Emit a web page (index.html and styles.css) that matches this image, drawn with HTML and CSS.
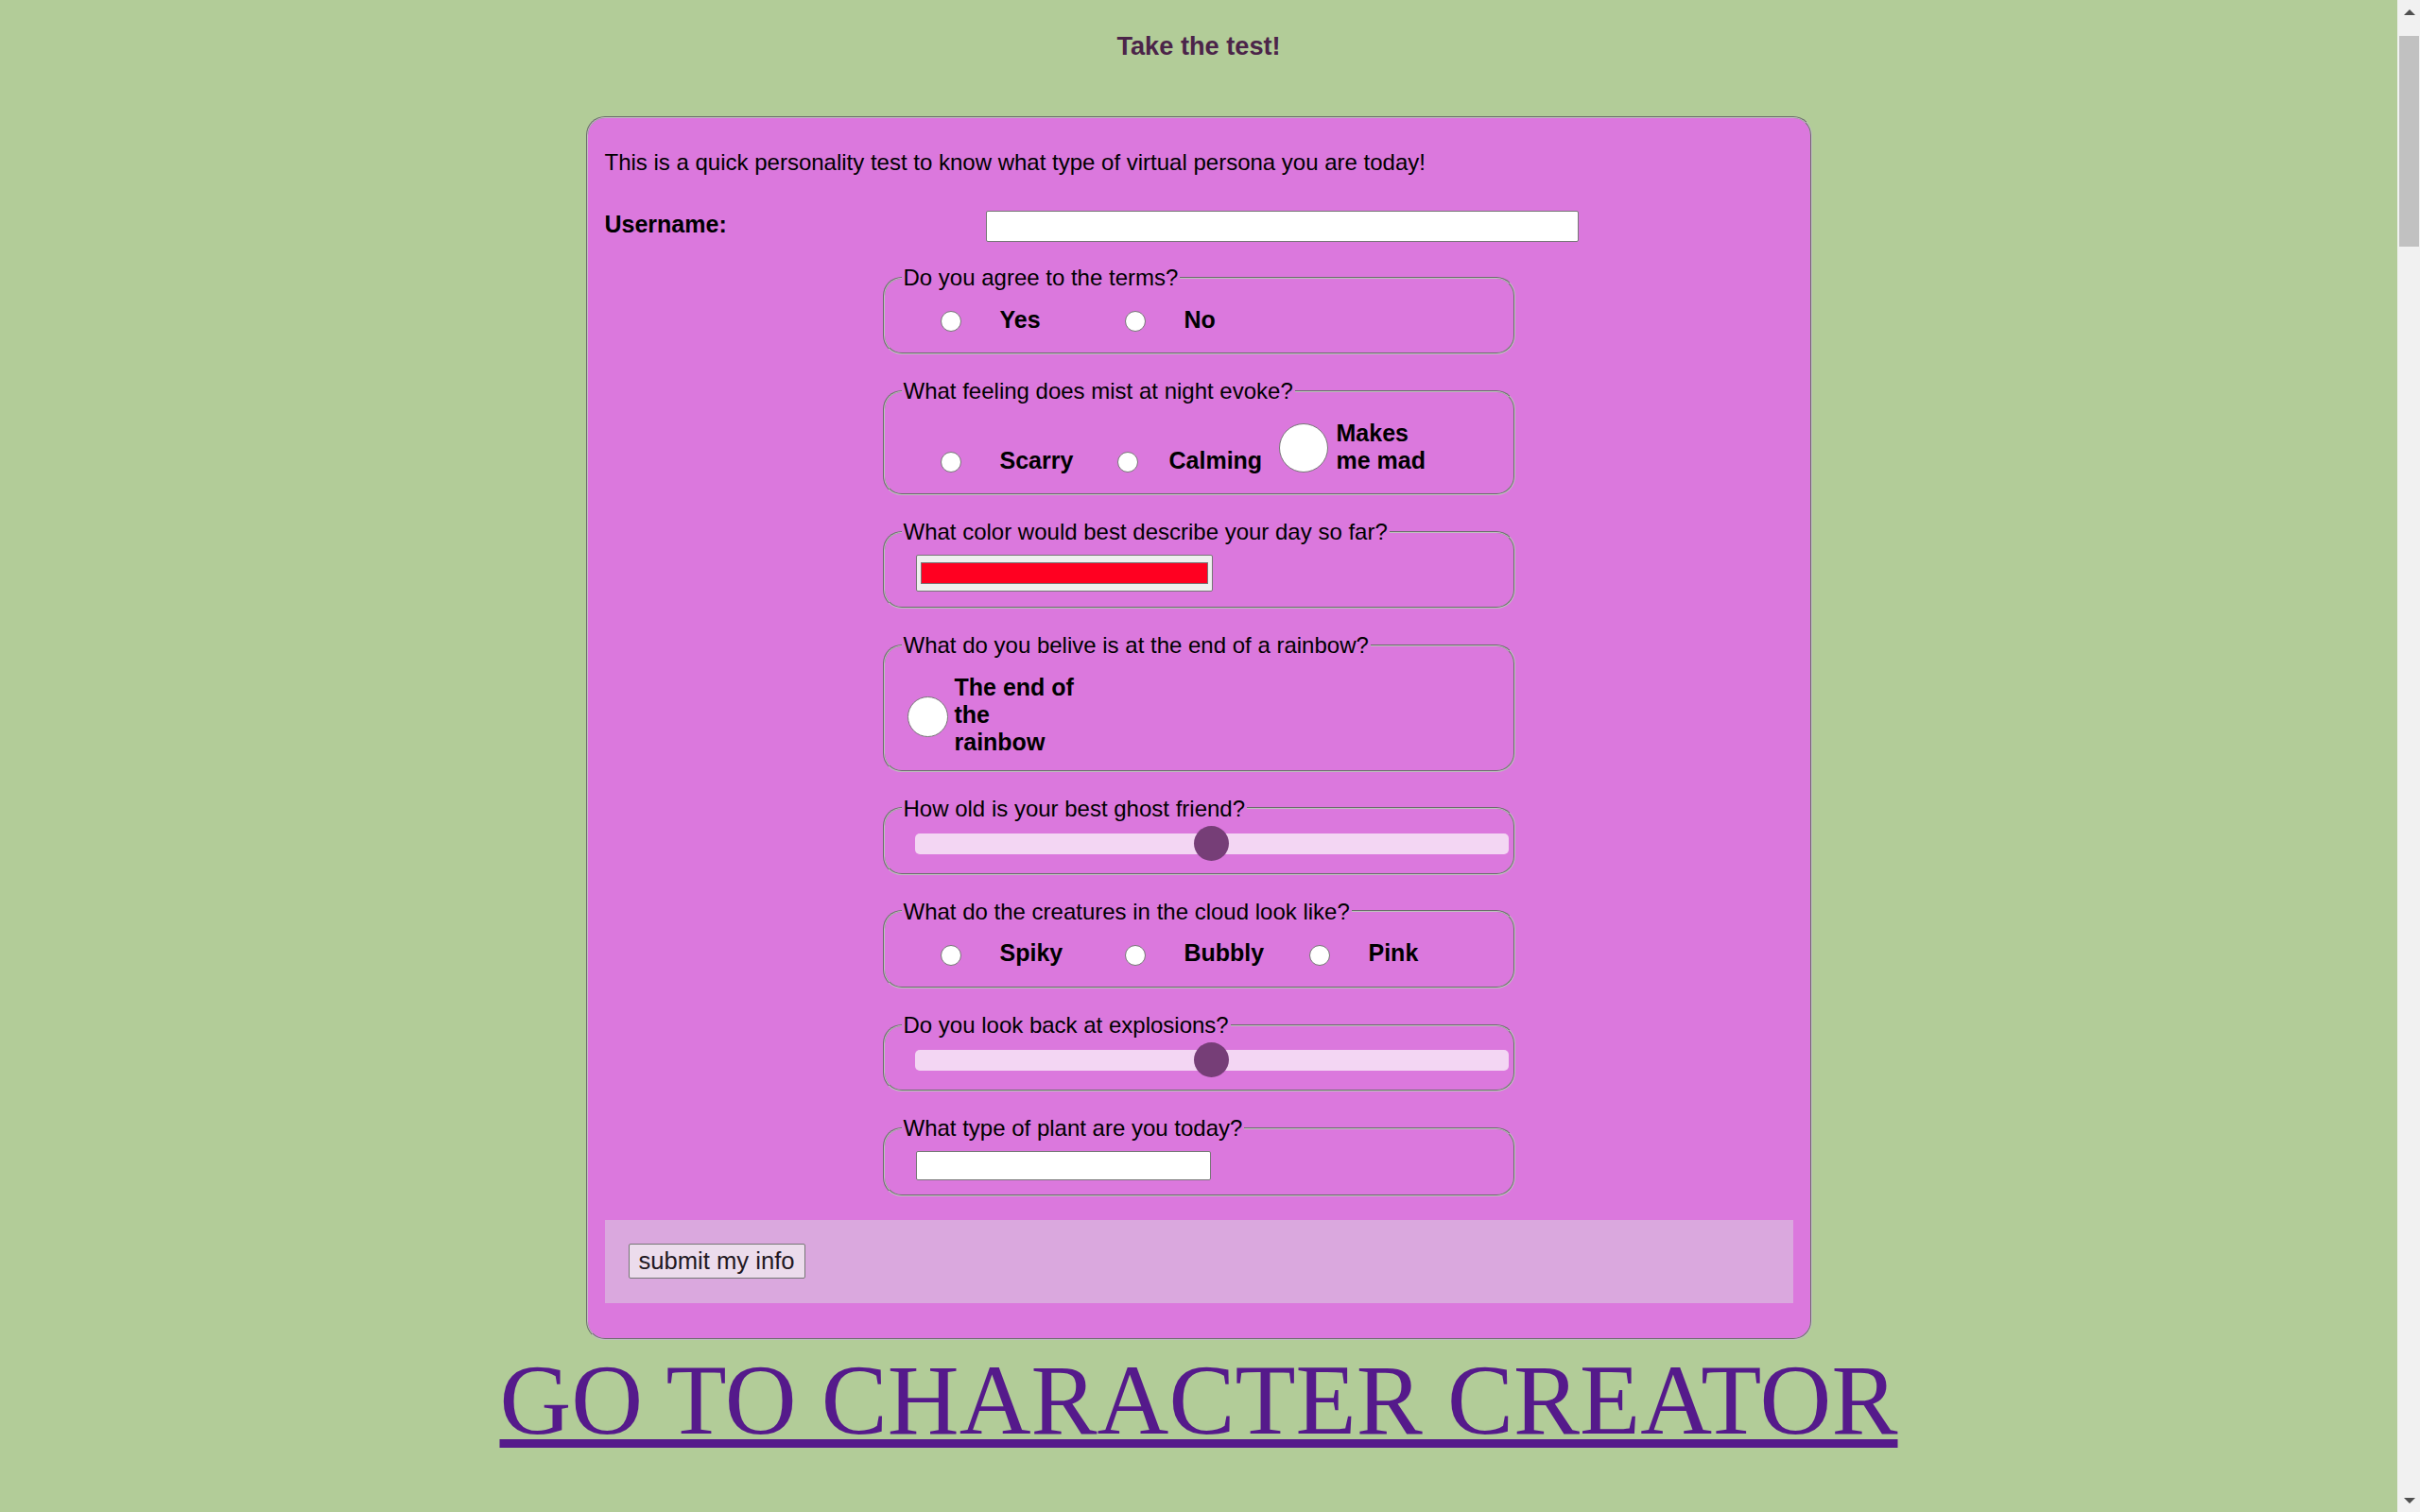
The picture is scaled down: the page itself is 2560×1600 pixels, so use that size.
FILE: index.html
```html
<!DOCTYPE html>
<html lang="en">
<head>
<meta charset="utf-8">
<title>Take the test!</title>
<link rel="stylesheet" href="styles.css">
</head>
<body>
<div class="page">
<h2 class="title">Take the test!</h2>
<form class="quiz">
  <p class="intro">This is a quick personality test to know what type of virtual persona you are today!</p>
  <div class="user-row">
    <label class="user-label" for="username">Username:</label>
    <input class="user-input" id="username" type="text">
  </div>

  <fieldset class="q">
    <legend>Do you agree to the terms?</legend>
    <div class="opts">
      <div class="opt"><input class="dot" type="radio" name="terms" id="t-yes"><label for="t-yes">Yes</label></div>
      <div class="opt"><input class="dot" type="radio" name="terms" id="t-no"><label for="t-no">No</label></div>
    </div>
  </fieldset>

  <fieldset class="q mist">
    <legend>What feeling does mist at night evoke?</legend>
    <div class="opts">
      <div class="opt"><input class="dot" type="radio" name="mist" id="m-1"><label for="m-1">Scarry</label></div>
      <div class="opt"><input class="dot" type="radio" name="mist" id="m-2"><label for="m-2">Calming</label></div>
      <div class="opt"><input class="dot" type="radio" name="mist" id="m-3"><label for="m-3">Makes me mad</label></div>
    </div>
  </fieldset>

  <fieldset class="q">
    <legend>What color would best describe your day so far?</legend>
    <input class="color-pick" type="color" value="#ff0021">
  </fieldset>

  <fieldset class="q rainbow">
    <legend>What do you belive is at the end of a rainbow?</legend>
    <div class="opts">
      <div class="opt"><input class="dot" type="radio" name="rainbow" id="r-1"><label for="r-1">The end of the rainbow</label></div>
    </div>
  </fieldset>

  <fieldset class="q">
    <legend>How old is your best ghost friend?</legend>
    <input class="slider" type="range" min="0" max="100" value="50">
  </fieldset>

  <fieldset class="q">
    <legend>What do the creatures in the cloud look like?</legend>
    <div class="opts">
      <div class="opt"><input class="dot" type="radio" name="cloud" id="c-1"><label for="c-1">Spiky</label></div>
      <div class="opt"><input class="dot" type="radio" name="cloud" id="c-2"><label for="c-2">Bubbly</label></div>
      <div class="opt"><input class="dot" type="radio" name="cloud" id="c-3"><label for="c-3">Pink</label></div>
    </div>
  </fieldset>

  <fieldset class="q">
    <legend>Do you look back at explosions?</legend>
    <input class="slider" type="range" min="0" max="100" value="50">
  </fieldset>

  <fieldset class="q">
    <legend>What type of plant are you today?</legend>
    <input class="plant" type="text">
  </fieldset>

  <div class="submit-bar">
    <button class="submit" type="submit">submit my info</button>
  </div>
</form>
<p class="creator-wrap"><a class="creator" href="#">GO TO CHARACTER CREATOR</a></p>
</div>
<div class="scrollbar" aria-hidden="true">
  <div class="sb-up"></div>
  <div class="sb-thumb"></div>
  <div class="sb-fill"></div>
  <div class="sb-down"></div>
</div>
</body>
</html>
```

FILE: styles.css
```css
html {
  background: #b2cc98;
}

body {
  margin: 0;
  display: flex;
  align-items: flex-start;
  font-family: "Liberation Sans", Arial, sans-serif;
  color: #000;
}

.page {
  flex: 1;
  min-width: 0;
}

/* scrollbar */
.scrollbar {
  flex: none;
  width: 24px;
  height: 100vh;
  display: flex;
  flex-direction: column;
  background: #f1f1f1;
}
.sb-up {
  height: 38px;
  flex: none;
}
.sb-up::before {
  content: "";
  display: block;
  width: 0;
  height: 0;
  margin: 10px 0 0 7px;
  border-left: 6px solid transparent;
  border-right: 6px solid transparent;
  border-bottom: 6px solid #505050;
}
.sb-thumb {
  flex: none;
  height: 223px;
  margin: 0 1px 0 2px;
  background: #c1c1c1;
}
.sb-fill {
  flex: 1;
}
.sb-down {
  flex: none;
  height: 24px;
}
.sb-down::before {
  content: "";
  display: block;
  width: 0;
  height: 0;
  margin: 9px 0 0 7px;
  border-left: 6px solid transparent;
  border-right: 6px solid transparent;
  border-top: 6px solid #505050;
}

.title {
  margin: 0 0 58.7px;
  padding-top: 33px;
  font-size: 27.2px;
  line-height: 31.3px;
  font-weight: bold;
  text-align: center;
  color: #4b2449;
}

.quiz {
  width: 1257px;
  margin: 0 auto;
  padding: 33px 18px 37px;
  border: 2px groove #c0c0c0;
  border-radius: 20px;
  background: #db78dd;
}

.intro {
  margin: 0;
  font-size: 24px;
  line-height: 27.6px;
}

.user-row {
  display: flex;
  align-items: flex-start;
  margin: 37.4px 0 24px;
}
.user-label {
  width: 403px;
  flex: none;
  font-size: 25px;
  line-height: 28.7px;
  font-weight: bold;
}
.user-input {
  width: 627px;
  height: 33px;
  box-sizing: border-box;
  margin: 0;
  padding: 0 2px;
  border: 1px solid #767676;
  border-radius: 2px;
  background: #fff;
  font-size: 24px;
}

.q {
  width: 629px;
  min-width: 0;
  margin: 0 auto 25px;
  padding: 8px 18px 15px;
  border: 2px groove #c0c0c0;
  border-radius: 20px;
}
.q legend {
  padding: 0 2px;
  font-size: 24px;
  line-height: 27.6px;
}

.opts {
  display: flex;
  align-items: flex-end;
  padding: 8px 0 6px;
}
.opt {
  display: flex;
  align-items: flex-end;
  flex: none;
  width: 195px;
}
.dot {
  -webkit-appearance: none;
  appearance: none;
  flex: none;
  box-sizing: border-box;
  width: 22px;
  height: 22px;
  margin: 0 41px 1px 41px;
  border: 1px solid #767676;
  border-radius: 50%;
  background: #fff;
}
.opt label {
  font-size: 25px;
  line-height: 28.7px;
  font-weight: bold;
}

.mist .opt:nth-child(1) {
  width: 187px;
}
.mist .opt:nth-child(2) {
  width: 171px;
}
.mist .opt:nth-child(2) .dot {
  margin-right: 33px;
}
.mist .opt:nth-child(3) {
  width: auto;
}
.mist .opt:nth-child(3) .dot {
  width: 52px;
  height: 52px;
  margin-right: 9px;
}
.mist .opt:nth-child(3) label {
  width: 100px;
}

.rainbow .opts {
  align-items: center;
  padding: 9px 0 0;
}
.rainbow .opt {
  width: auto;
  align-items: center;
}
.rainbow .dot {
  width: 43px;
  height: 43px;
  margin: 3px 7px 0 6px;
}
.rainbow .opt label {
  width: 132px;
}

.color-pick {
  -webkit-appearance: none;
  appearance: none;
  display: block;
  box-sizing: border-box;
  width: 314px;
  height: 39px;
  margin: 2px 0 1px 15px;
  padding: 7px 2px;
  border: 1px solid #767676;
  border-radius: 2px;
  background-color: #efefef;
}
.color-pick::-webkit-color-swatch-wrapper {
  padding: 0 2px;
}
.color-pick::-webkit-color-swatch {
  border: 1px solid #777;
  border-radius: 0;
}

.slider {
  -webkit-appearance: none;
  appearance: none;
  display: block;
  width: 628px;
  height: 22px;
  margin: 4.4px 0 5px 14px;
  border-radius: 5px;
  background: #f3d6f3;
  outline: none;
}
.slider::-webkit-slider-thumb {
  -webkit-appearance: none;
  appearance: none;
  width: 37px;
  height: 37px;
  border-radius: 50%;
  background: #763e77;
  border: none;
}

.plant {
  display: block;
  box-sizing: border-box;
  width: 312px;
  height: 31px;
  margin: 2.4px 0 0 15px;
  padding: 0 2px;
  border: 1px solid #767676;
  border-radius: 2px;
  background: #fff;
  font-size: 24px;
}

.submit-bar {
  padding: 25px 25px 26px;
  background: #daa8de;
}
.submit {
  margin: 0;
  padding: 3px 10px;
  font-family: "Liberation Sans", Arial, sans-serif;
  font-size: 25.6px;
  line-height: 29.4px;
  color: #221822;
  background: #ecdcec;
  border: 1px solid #767676;
  border-radius: 2px;
}

.creator-wrap {
  margin: 3px 0 0;
  text-align: center;
  font-family: "Liberation Serif", "Times New Roman", serif;
  font-size: 105px;
}
.creator {
  color: #551a8b;
  text-decoration: underline;
  text-decoration-thickness: 9px;
  text-underline-offset: 6px;
}
```
